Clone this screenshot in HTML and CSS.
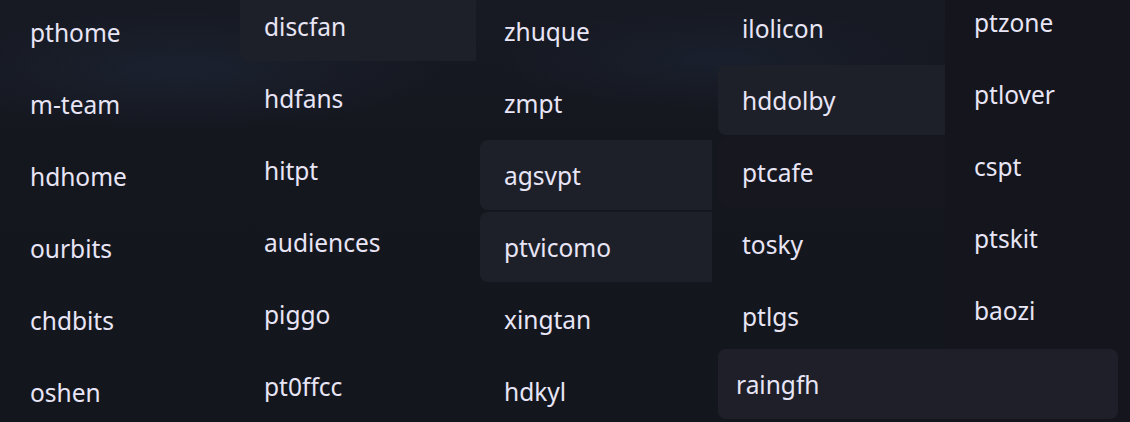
FILE: index.html
```html
<!DOCTYPE html>
<html lang="en">
<head>
<meta charset="utf-8">
<title>Sites</title>
<link rel="stylesheet" href="styles.css">
</head>
<body>
<div class="board">
  <div class="col col1">
    <div class="item">pthome</div>
    <div class="item">m-team</div>
    <div class="item">hdhome</div>
    <div class="item">ourbits</div>
    <div class="item">chdbits</div>
    <div class="item">oshen</div>
  </div>
  <div class="col col2">
    <div class="item active">discfan</div>
    <div class="item">hdfans</div>
    <div class="item">hitpt</div>
    <div class="item">audiences</div>
    <div class="item">piggo</div>
    <div class="item">pt0ffcc</div>
  </div>
  <div class="col col3">
    <div class="item">zhuque</div>
    <div class="item">zmpt</div>
    <div class="item active">agsvpt</div>
    <div class="item active">ptvicomo</div>
    <div class="item">xingtan</div>
    <div class="item">hdkyl</div>
  </div>
  <div class="col col4">
    <div class="item">ilolicon</div>
    <div class="item active">hddolby</div>
    <div class="item faint">ptcafe</div>
    <div class="item">tosky</div>
    <div class="item">ptlgs</div>
    <div class="item drag">raingfh</div>
  </div>
  <div class="col col5">
    <div class="item">ptzone</div>
    <div class="item">ptlover</div>
    <div class="item">cspt</div>
    <div class="item">ptskit</div>
    <div class="item">baozi</div>
  </div>
</div>
</body>
</html>
```

FILE: styles.css
```css
html, body {
  margin: 0;
  padding: 0;
}

body {
  width: 1130px;
  height: 422px;
  overflow: hidden;
  background:
    radial-gradient(ellipse 260px 60px at 180px 70px, rgba(30, 40, 58, 0.55), transparent),
    radial-gradient(ellipse 220px 50px at 720px 60px, rgba(28, 38, 56, 0.5), transparent),
    linear-gradient(180deg, #171a23 0px, #15171f 140px, #14161e 422px);
  font-family: "Noto Sans", "Open Sans", "DejaVu Sans", sans-serif;
  color: #e8e5f6;
}

.board {
  display: flex;
  align-items: flex-start;
  height: 422px;
}

.col {
  display: flex;
  flex-direction: column;
  gap: 2px;
  flex-shrink: 0;
}

.col1 {
  width: 224px;
  margin-left: 5px;
  margin-top: -3px;
}

.col2 {
  width: 236px;
  margin-left: 11px;
  margin-top: -9px;
}

.col3 {
  width: 232px;
  margin-left: 4px;
  margin-top: -4px;
}

.col4 {
  width: 227px;
  margin-left: 6px;
  margin-top: -7px;
}

.col5 {
  flex: 1;
  margin-top: -13px;
  height: 440px;
  background: #14151d;
}

.item {
  height: 70px;
  display: flex;
  align-items: center;
  padding-left: 24px;
  box-sizing: border-box;
  border-radius: 8px;
  font-size: 24.5px;
  white-space: nowrap;
}

.col1 .item {
  padding-left: 25px;
}

.col5 .item {
  padding-left: 29px;
}

.item.active {
  background: #1e2029;
}

.col2 .item.active,
.col3 .item.active,
.col4 .item.active {
  border-top-right-radius: 0;
  border-bottom-right-radius: 0;
}

.item.faint {
  background: #16171f;
  border-top-right-radius: 0;
  border-bottom-right-radius: 0;
}

.item.drag {
  position: relative;
  z-index: 2;
  width: 400px;
  margin-top: -4px;
  padding-left: 18px;
  background: #1e1f29;
}
```
